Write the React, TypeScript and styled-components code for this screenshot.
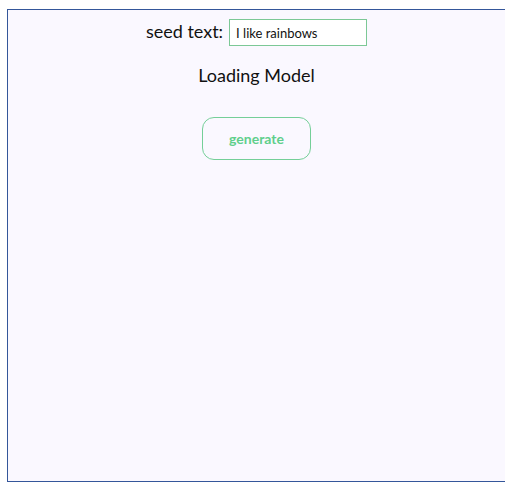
import styled, { createGlobalStyle } from 'styled-components';

const GlobalStyle = createGlobalStyle`
  body {
    margin: 9px 7px;
    background: #ffffff;
    font-family: Lato, "Open Sans", sans-serif;
  }
`;

const Frame = styled.div`
  box-sizing: border-box;
  width: 499px;
  height: 473px;
  border: 1px solid #34569a;
  background: #faf8ff;
  display: flex;
  flex-direction: column;
  align-items: center;
  padding-top: 9px;
`;

const SeedRow = styled.div`
  display: flex;
  align-items: flex-start;
  gap: 6px;
`;

const Label = styled.span`
  font-size: 18px;
  line-height: 22px;
  margin-top: 1px;
  color: #111;
`;

const SeedInput = styled.input`
  box-sizing: border-box;
  width: 138px;
  height: 27px;
  border: 1px solid #7cc896;
  background: #fff;
  padding: 0 6px;
  font-family: inherit;
  font-size: 13px;
  color: #111;
  outline: none;
`;

const Status = styled.div`
  margin-top: 18px;
  font-size: 18px;
  color: #111;
`;

const GenerateButton = styled.button`
  margin-top: 31px;
  width: 109px;
  height: 43px;
  border: 1px solid #74cf98;
  border-radius: 12px;
  background: transparent;
  color: #5fcf8c;
  font-family: inherit;
  font-weight: 700;
  font-size: 14px;
  cursor: pointer;
`;

const App = () => {
  return (
    <>
      <GlobalStyle />
      <Frame>
        <SeedRow>
          <Label>seed text:</Label>
          <SeedInput defaultValue="I like rainbows" />
        </SeedRow>
        <Status>Loading Model</Status>
        <GenerateButton>generate</GenerateButton>
      </Frame>
    </>
  );
};

export default App;
